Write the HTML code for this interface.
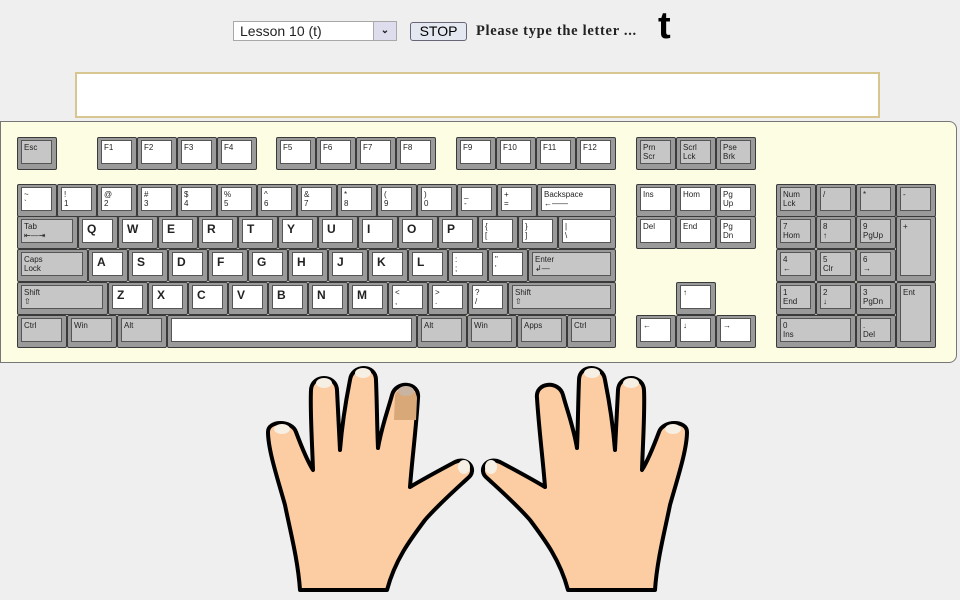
<!DOCTYPE html>
<html><head><meta charset="utf-8"><style>
body{margin:0;width:960px;height:600px;background:#efefef;position:relative;overflow:hidden;font-family:"Liberation Sans",sans-serif}
.sel{position:absolute;left:233px;top:21px;width:164px;height:20px;border:1px solid #a8a8a8;background:#fff;box-sizing:border-box;font-size:14px;line-height:18px;padding-left:6px;color:#222}
.sel b{position:absolute;right:0;top:0;width:22px;height:18px;background:#dde;border-left:1px solid #aaa;font-size:10px;text-align:center;line-height:18px;font-weight:bold}
.btn{position:absolute;left:410px;top:22px;width:57px;height:19px;border:1px solid #667;border-radius:3px;background:#e4e8f0;box-sizing:border-box;font-size:14px;text-align:center;line-height:17px}
.msg{position:absolute;left:476px;top:23px;font-family:"Liberation Serif",serif;font-size:14.5px;font-weight:bold;color:#222;letter-spacing:0.7px}
.big{position:absolute;left:658px;top:6px;font-size:38px;font-weight:bold;color:#000;line-height:40px}
.field{position:absolute;left:75px;top:72px;width:805px;height:46px;border:2px solid #d8c690;background:#fff;box-sizing:border-box}
.kb{position:absolute;left:0;top:121px;width:957px;height:242px;background:#fdfde4;border:1px solid #777;border-radius:0 8px 8px 0;box-sizing:border-box}
.k{position:absolute;height:33px;background:#9a9a9a;border:1px solid #3a3a3a;box-sizing:border-box;border-radius:2px}
.k span{position:absolute;left:3px;top:2px;right:4px;bottom:5px;background:#fff;border:1px solid #555;font-size:8px;line-height:9px;padding:2px 0 0 2px;color:#222;overflow:hidden}
.g span{background:#c6c6c6}
.L span{font-size:12px;font-weight:bold;line-height:14px;padding-left:4px}
</style></head><body>
<div class="sel">Lesson 10 (t)<b>&#8964;</b></div>
<div class="btn">STOP</div>
<div class="msg">Please type the letter ...</div>
<div class="big">t</div>
<div class="field"></div>
<div class="kb"></div>

<div class="k g" style="left:17px;top:137px;width:40px"><span>Esc</span></div>
<div class="k" style="left:97px;top:137px;width:40px"><span>F1</span></div>
<div class="k" style="left:137px;top:137px;width:40px"><span>F2</span></div>
<div class="k" style="left:177px;top:137px;width:40px"><span>F3</span></div>
<div class="k" style="left:217px;top:137px;width:40px"><span>F4</span></div>
<div class="k" style="left:276px;top:137px;width:40px"><span>F5</span></div>
<div class="k" style="left:316px;top:137px;width:40px"><span>F6</span></div>
<div class="k" style="left:356px;top:137px;width:40px"><span>F7</span></div>
<div class="k" style="left:396px;top:137px;width:40px"><span>F8</span></div>
<div class="k" style="left:456px;top:137px;width:40px"><span>F9</span></div>
<div class="k" style="left:496px;top:137px;width:40px"><span>F10</span></div>
<div class="k" style="left:536px;top:137px;width:40px"><span>F11</span></div>
<div class="k" style="left:576px;top:137px;width:40px"><span>F12</span></div>
<div class="k g" style="left:636px;top:137px;width:40px"><span>Prn<br>Scr</span></div>
<div class="k g" style="left:676px;top:137px;width:40px"><span>Scrl<br>Lck</span></div>
<div class="k g" style="left:716px;top:137px;width:40px"><span>Pse<br>Brk</span></div>

<div class="k" style="left:17px;top:184px;width:40px"><span>~<br>`</span></div>
<div class="k" style="left:57px;top:184px;width:40px"><span>!<br>1</span></div>
<div class="k" style="left:97px;top:184px;width:40px"><span>@<br>2</span></div>
<div class="k" style="left:137px;top:184px;width:40px"><span>#<br>3</span></div>
<div class="k" style="left:177px;top:184px;width:40px"><span>$<br>4</span></div>
<div class="k" style="left:217px;top:184px;width:40px"><span>%<br>5</span></div>
<div class="k" style="left:257px;top:184px;width:40px"><span>^<br>6</span></div>
<div class="k" style="left:297px;top:184px;width:40px"><span>&amp;<br>7</span></div>
<div class="k" style="left:337px;top:184px;width:40px"><span>*<br>8</span></div>
<div class="k" style="left:377px;top:184px;width:40px"><span>(<br>9</span></div>
<div class="k" style="left:417px;top:184px;width:40px"><span>)<br>0</span></div>
<div class="k" style="left:457px;top:184px;width:40px"><span>_<br>-</span></div>
<div class="k" style="left:497px;top:184px;width:40px"><span>+<br>=</span></div>
<div class="k" style="left:537px;top:184px;width:79px"><span>Backspace<br>&#8592;&#8212;&#8212;</span></div>

<div class="k g" style="left:17px;top:216px;width:61px"><span>Tab<br>&#8676;&#8212;&#8677;</span></div>
<div class="k L" style="left:78px;top:216px;width:40px"><span>Q</span></div>
<div class="k L" style="left:118px;top:216px;width:40px"><span>W</span></div>
<div class="k L" style="left:158px;top:216px;width:40px"><span>E</span></div>
<div class="k L" style="left:198px;top:216px;width:40px"><span>R</span></div>
<div class="k L" style="left:238px;top:216px;width:40px"><span>T</span></div>
<div class="k L" style="left:278px;top:216px;width:40px"><span>Y</span></div>
<div class="k L" style="left:318px;top:216px;width:40px"><span>U</span></div>
<div class="k L" style="left:358px;top:216px;width:40px"><span>I</span></div>
<div class="k L" style="left:398px;top:216px;width:40px"><span>O</span></div>
<div class="k L" style="left:438px;top:216px;width:40px"><span>P</span></div>
<div class="k" style="left:478px;top:216px;width:40px"><span>{<br>[</span></div>
<div class="k" style="left:518px;top:216px;width:40px"><span>}<br>]</span></div>
<div class="k" style="left:558px;top:216px;width:58px"><span>|<br>\</span></div>

<div class="k g" style="left:17px;top:249px;width:71px"><span>Caps<br>Lock</span></div>
<div class="k L" style="left:88px;top:249px;width:40px"><span>A</span></div>
<div class="k L" style="left:128px;top:249px;width:40px"><span>S</span></div>
<div class="k L" style="left:168px;top:249px;width:40px"><span>D</span></div>
<div class="k L" style="left:208px;top:249px;width:40px"><span>F</span></div>
<div class="k L" style="left:248px;top:249px;width:40px"><span>G</span></div>
<div class="k L" style="left:288px;top:249px;width:40px"><span>H</span></div>
<div class="k L" style="left:328px;top:249px;width:40px"><span>J</span></div>
<div class="k L" style="left:368px;top:249px;width:40px"><span>K</span></div>
<div class="k L" style="left:408px;top:249px;width:40px"><span>L</span></div>
<div class="k" style="left:448px;top:249px;width:40px"><span>:<br>;</span></div>
<div class="k" style="left:488px;top:249px;width:40px"><span>"<br>'</span></div>
<div class="k g" style="left:528px;top:249px;width:88px"><span>Enter<br>&#8626;&#8212;</span></div>

<div class="k g" style="left:17px;top:282px;width:91px"><span>Shift<br>&#8679;</span></div>
<div class="k L" style="left:108px;top:282px;width:40px"><span>Z</span></div>
<div class="k L" style="left:148px;top:282px;width:40px"><span>X</span></div>
<div class="k L" style="left:188px;top:282px;width:40px"><span>C</span></div>
<div class="k L" style="left:228px;top:282px;width:40px"><span>V</span></div>
<div class="k L" style="left:268px;top:282px;width:40px"><span>B</span></div>
<div class="k L" style="left:308px;top:282px;width:40px"><span>N</span></div>
<div class="k L" style="left:348px;top:282px;width:40px"><span>M</span></div>
<div class="k" style="left:388px;top:282px;width:40px"><span>&lt;<br>,</span></div>
<div class="k" style="left:428px;top:282px;width:40px"><span>&gt;<br>.</span></div>
<div class="k" style="left:468px;top:282px;width:40px"><span>?<br>/</span></div>
<div class="k g" style="left:508px;top:282px;width:108px"><span>Shift<br>&#8679;</span></div>

<div class="k g" style="left:17px;top:315px;width:50px"><span>Ctrl</span></div>
<div class="k g" style="left:67px;top:315px;width:50px"><span>Win</span></div>
<div class="k g" style="left:117px;top:315px;width:50px"><span>Alt</span></div>
<div class="k" style="left:167px;top:315px;width:250px"><span></span></div>
<div class="k g" style="left:417px;top:315px;width:50px"><span>Alt</span></div>
<div class="k g" style="left:467px;top:315px;width:50px"><span>Win</span></div>
<div class="k g" style="left:517px;top:315px;width:50px"><span>Apps</span></div>
<div class="k g" style="left:567px;top:315px;width:49px"><span>Ctrl</span></div>

<div class="k" style="left:636px;top:184px;width:40px"><span>Ins</span></div>
<div class="k" style="left:676px;top:184px;width:40px"><span>Hom</span></div>
<div class="k" style="left:716px;top:184px;width:40px"><span>Pg<br>Up</span></div>
<div class="k" style="left:636px;top:216px;width:40px"><span>Del</span></div>
<div class="k" style="left:676px;top:216px;width:40px"><span>End</span></div>
<div class="k" style="left:716px;top:216px;width:40px"><span>Pg<br>Dn</span></div>
<div class="k" style="left:676px;top:282px;width:40px"><span>&#8593;</span></div>
<div class="k" style="left:636px;top:315px;width:40px"><span>&#8592;</span></div>
<div class="k" style="left:676px;top:315px;width:40px"><span>&#8595;</span></div>
<div class="k" style="left:716px;top:315px;width:40px"><span>&#8594;</span></div>

<div class="k g" style="left:776px;top:184px;width:40px"><span>Num<br>Lck</span></div>
<div class="k g" style="left:816px;top:184px;width:40px"><span>/</span></div>
<div class="k g" style="left:856px;top:184px;width:40px"><span>*</span></div>
<div class="k g" style="left:896px;top:184px;width:40px"><span>-</span></div>
<div class="k g" style="left:776px;top:216px;width:40px"><span>7<br>Hom</span></div>
<div class="k g" style="left:816px;top:216px;width:40px"><span>8<br>&#8593;</span></div>
<div class="k g" style="left:856px;top:216px;width:40px"><span>9<br>PgUp</span></div>
<div class="k g" style="left:896px;top:216px;width:40px;height:66px"><span>+</span></div>
<div class="k g" style="left:776px;top:249px;width:40px"><span>4<br>&#8592;</span></div>
<div class="k g" style="left:816px;top:249px;width:40px"><span>5<br>Clr</span></div>
<div class="k g" style="left:856px;top:249px;width:40px"><span>6<br>&#8594;</span></div>
<div class="k g" style="left:776px;top:282px;width:40px"><span>1<br>End</span></div>
<div class="k g" style="left:816px;top:282px;width:40px"><span>2<br>&#8595;</span></div>
<div class="k g" style="left:856px;top:282px;width:40px"><span>3<br>PgDn</span></div>
<div class="k g" style="left:896px;top:282px;width:40px;height:66px"><span>Ent</span></div>
<div class="k g" style="left:776px;top:315px;width:80px"><span>0<br>Ins</span></div>
<div class="k g" style="left:856px;top:315px;width:40px"><span>.<br>Del</span></div>

<svg style="position:absolute;left:0;top:0" width="960" height="600">
<defs>
<g id="hand">
<path d="M300,590 C298,560 290,530 285,505 C278,480 268,450 268,432 C268,420 292,420 296,432 C302,448 308,462 313,470 C312,440 310,410 311,390 C312,374 336,374 337,390 C338,410 339,430 340,450 C342,425 346,400 350,380 C352,364 376,364 376,380 C377,405 377,425 378,448 C382,425 388,410 392,395 C396,380 420,382 418,398 C416,430 412,460 410,487 C425,478 440,470 455,462 C468,456 478,470 468,478 C455,490 438,505 425,520 C410,540 395,560 387,590 Z" fill="#fccca2" stroke="#000" stroke-width="4" stroke-linejoin="round"/>
<ellipse cx="282" cy="429" rx="8" ry="5" fill="#f6efe4"/>
<ellipse cx="324" cy="383" rx="8" ry="5" fill="#f6efe4"/>
<ellipse cx="363" cy="373" rx="8" ry="5" fill="#f6efe4"/>
<ellipse cx="464" cy="467" rx="6" ry="7" fill="#f6efe4"/>
</g>
</defs>
<use href="#hand"/>
<use href="#hand" transform="translate(955,0) scale(-1,1)"/>
<path d="M395,395 C398,386 416,386 417,398 L416,420 L394,420 Z" fill="#d9a878"/>
<ellipse cx="406" cy="391" rx="8" ry="5" fill="#c8b4a0"/>
</svg>
</body></html>
